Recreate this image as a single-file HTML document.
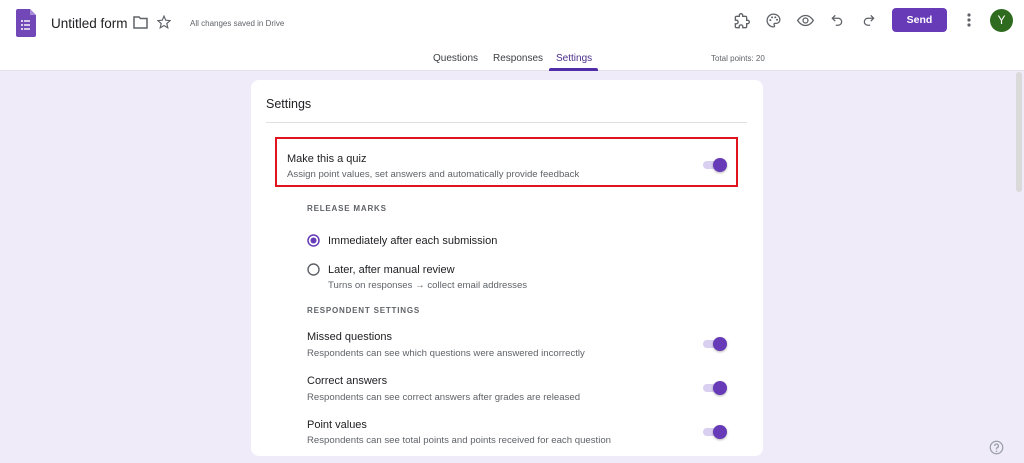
<!DOCTYPE html>
<html><head><meta charset="utf-8"><style>
*{margin:0;padding:0;box-sizing:border-box}
body{width:1024px;height:463px;overflow:hidden;background:#efebf9;font-family:"Liberation Sans",sans-serif;position:relative;color:#202124}
.a{position:absolute;white-space:nowrap}
#hdr{position:absolute;left:0;top:0;width:1024px;height:71px;background:#fff;border-bottom:1px solid #e3e0ea}
.card{position:absolute;left:251px;top:80px;width:512px;height:376px;background:#fff;border-radius:8px}
.t{font-size:11px;color:#202124}
.s{font-size:9.6px;color:#5f6368}
.cap{font-size:8px;color:#5f6368;letter-spacing:.8px;font-weight:bold}
.tg{position:absolute;width:24px;height:14px}
.tg:before{content:"";position:absolute;left:0;top:3px;width:22px;height:8px;border-radius:4px;background:#d9cff0}
.tg:after{content:"";position:absolute;left:10px;top:0;width:14px;height:14px;border-radius:50%;background:#673ab7;box-shadow:0 1px 2px rgba(0,0,0,.3)}
</style></head><body>
<div id="hdr">
<svg class="a" style="left:16px;top:9px" width="20" height="28" viewBox="0 0 20 28"><path d="M2 0h12l6 6v20a2 2 0 0 1-2 2H2a2 2 0 0 1-2-2V2a2 2 0 0 1 2-2z" fill="#7248b9"/><path d="M14 0v6h6z" fill="#a88bd6"/><g fill="#fff"><circle cx="6" cy="12" r="1"/><circle cx="6" cy="16" r="1"/><circle cx="6" cy="20" r="1"/><rect x="8" y="11.3" width="6" height="1.4"/><rect x="8" y="15.3" width="6" height="1.4"/><rect x="8" y="19.3" width="6" height="1.4"/></g></svg>
<div class="a" style="left:51px;top:16px;font-size:13.5px;color:#202124">Untitled form</div>
<svg class="a" style="left:133px;top:16px" width="15" height="13" viewBox="0 0 15 13"><path d="M1 1h5l1.5 1.5H14v9.5H1z" fill="none" stroke="#5f6368" stroke-width="1.5"/></svg>
<svg class="a" style="left:157px;top:15px" width="14" height="14" viewBox="0 0 24 24"><path d="M12 2l3 7 7.5.6-5.7 5 1.7 7.4L12 18l-6.5 4 1.7-7.4-5.7-5L9 9z" fill="none" stroke="#5f6368" stroke-width="2"/></svg>
<div class="a" style="left:190px;top:19px;font-size:8px;color:#5f6368">All changes saved in Drive</div>
<svg class="a" style="left:734px;top:13px" width="16" height="16" viewBox="0 0 24 24"><path d="M20.5 11H19V7a2 2 0 0 0-2-2h-4V3.5a2.5 2.5 0 0 0-5 0V5H4a2 2 0 0 0-2 2v3.8h1.5a2.7 2.7 0 0 1 0 5.4H2V20a2 2 0 0 0 2 2h3.8v-1.5a2.7 2.7 0 0 1 5.4 0V22H17a2 2 0 0 0 2-2v-4h1.5a2.5 2.5 0 0 0 0-5z" fill="none" stroke="#5f6368" stroke-width="2"/></svg>
<svg class="a" style="left:765px;top:12px" width="17" height="17" viewBox="0 0 24 24"><path d="M12 3a9 9 0 0 0 0 18c1 0 1.5-.7 1.5-1.5 0-.4-.2-.7-.4-1-.2-.3-.4-.6-.4-1 0-.8.7-1.5 1.5-1.5H16a5 5 0 0 0 5-5c0-4.4-4-8-9-8z" fill="none" stroke="#5f6368" stroke-width="1.8"/><circle cx="7.5" cy="11.5" r="1.4" fill="#5f6368"/><circle cx="10" cy="7.5" r="1.4" fill="#5f6368"/><circle cx="14.5" cy="7.5" r="1.4" fill="#5f6368"/><circle cx="17" cy="11" r="1.4" fill="#5f6368"/></svg>
<svg class="a" style="left:797px;top:12px" width="17" height="17" viewBox="0 0 24 24"><path d="M1 12s4-7 11-7 11 7 11 7-4 7-11 7S1 12 1 12z" fill="none" stroke="#5f6368" stroke-width="1.8"/><circle cx="12" cy="12" r="3.5" fill="none" stroke="#5f6368" stroke-width="1.8"/></svg>
<svg class="a" style="left:830px;top:13px" width="14" height="14" viewBox="0 0 24 24"><path d="M9 4L4 9l5 5M4 9h10a6 6 0 0 1 0 12h-4" fill="none" stroke="#5f6368" stroke-width="2.2"/></svg>
<svg class="a" style="left:862px;top:13px" width="14" height="14" viewBox="0 0 24 24"><path d="M15 4l5 5-5 5M20 9H10a6 6 0 0 0 0 12h4" fill="none" stroke="#5f6368" stroke-width="2.2"/></svg>
<div class="a" style="left:892px;top:8px;width:55px;height:24px;background:#673ab7;border-radius:4px;color:#fff;font-size:10.5px;font-weight:bold;text-align:center;line-height:24px">Send</div>
<svg class="a" style="left:966px;top:12px" width="6" height="16"><circle cx="3" cy="3" r="1.6" fill="#5f6368"/><circle cx="3" cy="8" r="1.6" fill="#5f6368"/><circle cx="3" cy="13" r="1.6" fill="#5f6368"/></svg>
<div class="a" style="left:990px;top:9px;width:23px;height:23px;border-radius:50%;background:#2e6b1f;color:#fff;font-size:12px;text-align:center;line-height:23px">Y</div>
<div class="a" style="left:433px;top:53px;font-size:10px;color:#3c4043">Questions</div>
<div class="a" style="left:493px;top:53px;font-size:10px;color:#3c4043">Responses</div>
<div class="a" style="left:556px;top:53px;font-size:10px;color:#4a2e8a">Settings</div>
<div class="a" style="left:549px;top:68px;width:49px;height:3px;background:#512da8;border-radius:2px 2px 0 0"></div>
<div class="a" style="left:711px;top:54px;font-size:8px;color:#5f6368">Total points: 20</div>
</div>
<div class="a" style="left:1016px;top:72px;width:6px;height:120px;background:#dadada;border-radius:3px"></div>
<div class="card">
<div class="a" style="left:15px;top:17px;font-size:12.5px;color:#202124">Settings</div>
<div class="a" style="left:15px;top:42px;width:481px;height:1px;background:#e0e0e0"></div>
<div class="a" style="left:24px;top:57px;width:463px;height:50px;border:2px solid #e0141e"></div>
<div class="a t" style="left:36px;top:73px">Make this a quiz</div>
<div class="a s" style="left:36px;top:89px">Assign point values, set answers and automatically provide feedback</div>
<div class="tg" style="left:452px;top:78px"></div>
<div class="a cap" style="left:56px;top:124px">RELEASE MARKS</div>
<svg class="a" style="left:56px;top:154px" width="13" height="13"><circle cx="6.5" cy="6.5" r="5.5" fill="none" stroke="#673ab7" stroke-width="1.5"/><circle cx="6.5" cy="6.5" r="3" fill="#673ab7"/></svg>
<div class="a t" style="left:77px;top:155px">Immediately after each submission</div>
<svg class="a" style="left:56px;top:183px" width="13" height="13"><circle cx="6.5" cy="6.5" r="5.5" fill="none" stroke="#5f6368" stroke-width="1.4"/></svg>
<div class="a t" style="left:77px;top:184px">Later, after manual review</div>
<div class="a s" style="left:77px;top:200px">Turns on responses → collect email addresses</div>
<div class="a cap" style="left:56px;top:226px">RESPONDENT SETTINGS</div>
<div class="a t" style="left:56px;top:251px">Missed questions</div>
<div class="a s" style="left:56px;top:268px">Respondents can see which questions were answered incorrectly</div>
<div class="tg" style="left:452px;top:257px"></div>
<div class="a t" style="left:56px;top:295px">Correct answers</div>
<div class="a s" style="left:56px;top:312px">Respondents can see correct answers after grades are released</div>
<div class="tg" style="left:452px;top:301px"></div>
<div class="a t" style="left:56px;top:339px">Point values</div>
<div class="a s" style="left:56px;top:355px">Respondents can see total points and points received for each question</div>
<div class="tg" style="left:452px;top:345px"></div>
</div>
<svg class="a" style="left:989px;top:440px" width="15" height="15" viewBox="0 0 24 24"><circle cx="12" cy="12" r="10" fill="none" stroke="#9aa0a6" stroke-width="2"/><path d="M9 9.5a3 3 0 1 1 4 2.8c-.8.4-1 1-1 1.7V15" fill="none" stroke="#9aa0a6" stroke-width="2"/><circle cx="12" cy="18" r="1.2" fill="#9aa0a6"/></svg>
</body></html>
